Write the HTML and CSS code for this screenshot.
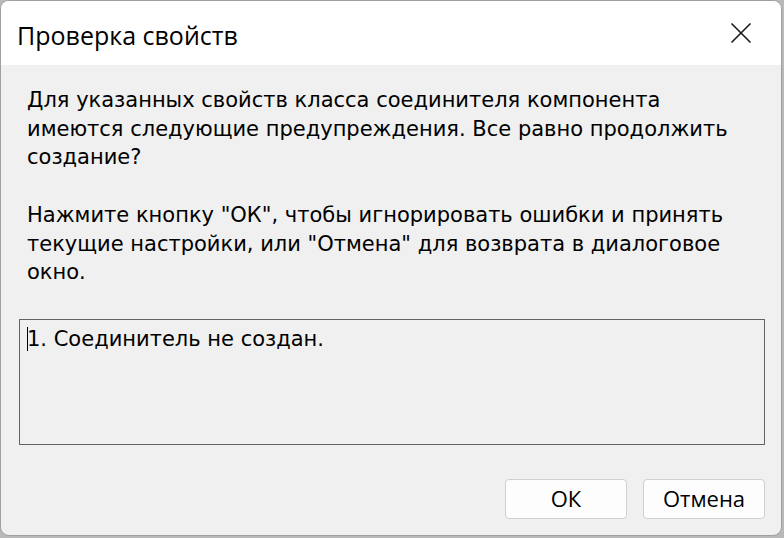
FILE: index.html
```html
<!DOCTYPE html>
<html lang="ru">
<head>
<meta charset="utf-8">
<link rel="stylesheet" href="styles.css">
</head>
<body>
<div class="window">
  <div class="titlebar">
    <span class="title">Проверка свойств</span>
    <span class="close">
      <svg width="22" height="22" viewBox="0 0 22 22"><path d="M1.5 1.5 L20.5 20.5 M20.5 1.5 L1.5 20.5" stroke="#1a1a1a" stroke-width="1.6" fill="none"/></svg>
    </span>
  </div>
  <div class="content">
    <p class="msg">Для указанных свойств класса соединителя компонента имеются следующие предупреждения. Все равно продолжить создание?</p>
    <p class="msg">Нажмите кнопку "ОК", чтобы игнорировать ошибки и принять текущие настройки, или "Отмена" для возврата в диалоговое окно.</p>
    <div class="list"><span class="caret"></span>1. Соединитель не создан.</div>
    <div class="buttons">
      <button class="btn">ОК</button>
      <button class="btn">Отмена</button>
    </div>
  </div>
</div>
</body>
</html>
```
FILE: styles.css
```css
html, body {
  margin: 0;
  padding: 0;
}
body {
  width: 784px;
  height: 538px;
  background: #b9b9b9;
  overflow: hidden;
}
.window {
  box-sizing: border-box;
  width: 782px;
  height: 536px;
  border: 1px solid #a0a0a0;
  border-radius: 9px;
  background: #f0f0f0;
  overflow: hidden;
  display: flex;
  flex-direction: column;
}
.titlebar {
  height: 64px;
  background: #ffffff;
  display: flex;
  align-items: center;
  justify-content: space-between;
  padding: 0 29px 0 16px;
  flex-shrink: 0;
}
.title {
  font-family: "Open Sans", "Noto Sans", sans-serif;
  font-size: 25px;
  color: #000;
  padding-top: 3px;
}
.close {
  display: flex;
  width: 22px;
  height: 22px;
}
.content {
  padding: 21px 0 0 18px;
  display: flex;
  flex-direction: column;
  flex: 1;
}
.msg {
  margin: 0 0 28.7px 8px;
  width: 715px;
  font-family: "DejaVu Sans", sans-serif;
  font-size: 21px;
  line-height: 28.7px;
  color: #000;
}
.msg + .msg {
  margin-bottom: 32px;
}
.list {
  box-sizing: border-box;
  width: 746px;
  height: 126px;
  border: 1px solid #646464;
  padding: 5px 0 0 7px;
  font-family: "DejaVu Sans", sans-serif;
  font-size: 21px;
  line-height: 28px;
  color: #000;
  position: relative;
}
.caret {
  position: absolute;
  left: 7px;
  top: 7px;
  width: 1px;
  height: 24px;
  background: #000;
}
.buttons {
  display: flex;
  justify-content: flex-end;
  gap: 16px;
  margin-top: 34px;
  width: 746px;
}
.btn {
  box-sizing: border-box;
  width: 122px;
  height: 40px;
  background: #fdfdfd;
  border: 1px solid #d0d0d0;
  border-radius: 4px;
  font-family: "Open Sans", "Noto Sans", sans-serif;
  font-size: 22px;
  color: #000;
  padding: 0 0 2px 0;
}
```
